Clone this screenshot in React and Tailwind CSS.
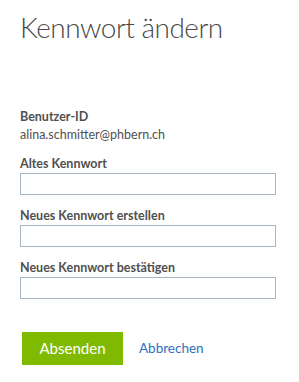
export default function App() {
  const font = { fontFamily: 'Lato, "Open Sans", sans-serif' };
  return (
    <div className="w-[299px] h-[382px] bg-white pl-[20px] pt-[7px] text-[#505050]" style={font}>
      <h1 className="text-[28px] leading-[40px] font-light text-[#4a4a4a] tracking-[-0.5px]">Kennwort ändern</h1>
      <div className="mt-[61px] text-[12.5px] leading-[17px]">
        <div className="font-bold text-[#505050]">Benutzer-ID</div>
        <div className="mt-[1px] text-[#505050]">alina.schmitter@phbern.ch</div>
        <div className="mt-[12px] flex flex-col gap-[12px]">
          {["Altes Kennwort", "Neues Kennwort erstellen", "Neues Kennwort bestätigen"].map((l) => (
            <div key={l} className="flex flex-col">
              <div className="font-bold text-[#505050]">{l}</div>
              <input type="password" className="mt-[1px] w-[256px] h-[22px] border border-[#a6b6c7] bg-white outline-none" />
            </div>
          ))}
        </div>
        <div className="mt-[33px] flex items-center">
          <button className="ml-[2px] w-[101px] h-[33px] bg-[#7fba00] text-white text-[15px]">Absenden</button>
          <a className="ml-[16px] text-[#2f6fbf] text-[13.5px]">Abbrechen</a>
        </div>
      </div>
    </div>
  );
}
